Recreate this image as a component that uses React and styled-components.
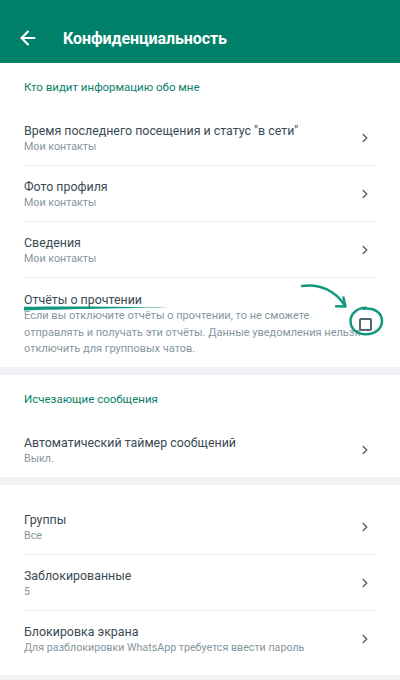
import React from 'react'
import styled, { createGlobalStyle } from 'styled-components'
import { ArrowLeft, ChevronRight } from 'lucide-react'

const GlobalStyle = createGlobalStyle`
    html, body {
        margin: 0;
        padding: 0;
        background: #ffffff;
    }
    body {
        font-family: Roboto, "Open Sans", sans-serif;
        -webkit-font-smoothing: antialiased;
    }
`

const sections = [
    {
        title: 'Кто видит информацию обо мне',
        rows: [
            { title: 'Время последнего посещения и статус "в сети"', sub: 'Мои контакты' },
            { title: 'Фото профиля', sub: 'Мои контакты' },
            { title: 'Сведения', sub: 'Мои контакты' },
        ],
        receipts: true,
    },
    {
        title: 'Исчезающие сообщения',
        rows: [{ title: 'Автоматический таймер сообщений', sub: 'Выкл.' }],
    },
    {
        rows: [
            { title: 'Группы', sub: 'Все' },
            { title: 'Заблокированные', sub: '5' },
            { title: 'Блокировка экрана', sub: 'Для разблокировки WhatsApp требуется ввести пароль' },
        ],
    },
]

const Annotation = () => (
    <AnnotationSvg width="110" height="70" viewBox="0 0 110 70">
        {/* hand drawn underline under the title */}
        <path d="M-266 28.8 C -230 28.2, -180 28.4, -121 29.6 C -180 30.4, -230 31.6, -266 32.4 Z" fill="#11987f" />
        {/* curved arrow */}
        <path d="M12 8 C 30 5.5, 46 13, 55 28" fill="none" stroke="#11987f" strokeWidth="2.4" strokeLinecap="round" />
        <path d="M53.5 19.5 L 55.5 28.5 L 46 28.2" fill="none" stroke="#11987f" strokeWidth="2.4" strokeLinecap="round" strokeLinejoin="round" />
        {/* circle around the checkbox */}
        <path d="M76 29.8 C 68 29.8, 60.5 35, 60.5 43 C 60.5 51, 67 56.3, 76 56.3 C 85 56.3, 92 50.5, 92 43 C 92 35, 85 29.5, 73.5 30.8" fill="none" stroke="#11987f" strokeWidth="2.5" strokeLinecap="round" />
    </AnnotationSvg>
)

const App = () => {
    return (
        <Page>
            <GlobalStyle />
            <Header>
                <BackButton>
                    <ArrowLeft size={22} strokeWidth={2.3} />
                </BackButton>
                <HeaderTitle>Конфиденциальность</HeaderTitle>
            </Header>

            {sections.map((section, i) => (
                <Section key={i} plain={!section.title}>
                    {section.title && <SectionTitle>{section.title}</SectionTitle>}
                    {section.rows.map((row, j) => (
                        <Row key={j} last={!section.receipts && j === section.rows.length - 1}>
                            <RowText>
                                <RowTitle>{row.title}</RowTitle>
                                <RowSub>{row.sub}</RowSub>
                            </RowText>
                            <IconSlot>
                                <ChevronRight size={14} strokeWidth={2.6} color="#54656f" />
                            </IconSlot>
                        </Row>
                    ))}
                    {section.receipts && (
                        <Row last receipts>
                            <RowText>
                                <RowTitle>Отчёты о прочтении</RowTitle>
                                <Description>
                                    Если вы отключите отчёты о прочтении, то не сможете<br />
                                    отправлять и получать эти отчёты. Данные уведомления нельзя<br />
                                    отключить для групповых чатов.
                                </Description>
                            </RowText>
                            <IconSlot>
                                <Checkbox />
                            </IconSlot>
                            <Annotation />
                        </Row>
                    )}
                </Section>
            ))}
        </Page>
    )
}

export default App

const Page = styled.div`
    width: 400px;
    min-height: 680px;
    background: #f0f2f5;
    overflow: hidden;
`

const Header = styled.header`
    height: 63px;
    box-sizing: border-box;
    padding: 13px 0 0 16px;
    background: #008069;
    color: #ffffff;
    display: flex;
    align-items: center;
`

const BackButton = styled.div`
    width: 24px;
    height: 24px;
    display: flex;
    align-items: center;
    justify-content: center;
    margin-right: 23px;
`

const HeaderTitle = styled.h1`
    margin: 0;
    font-size: 16px;
    font-weight: 700;
    letter-spacing: -0.1px;
`

const Section = styled.section`
    background: #ffffff;
    padding-top: ${p => (p.plain ? '14px' : '17px')};
    padding-bottom: ${p => (p.plain ? '9px' : '0')};
    margin-bottom: 8px;
`

const SectionTitle = styled.h2`
    margin: 0 24px 15px;
    font-size: 11.5px;
    line-height: 15px;
    font-weight: 400;
    color: #0b7f6b;
`

const Row = styled.div`
    position: relative;
    margin: 0 23px 0 24px;
    padding: ${p => (p.receipts ? '13px 0 9px' : '12px 0 11px')};
    border-bottom: ${p => (p.last ? 'none' : '1px solid #e9edef')};
    display: flex;
    align-items: center;
`

const RowText = styled.div`
    flex: 1;
    min-width: 0;
`

const RowTitle = styled.div`
    font-size: 12.4px;
    line-height: 17px;
    color: #3b4a54;
`

const RowSub = styled.div`
    font-size: 10.7px;
    line-height: 15px;
    color: #8696a0;
`

const Description = styled.div`
    font-size: 11px;
    line-height: 16.5px;
    color: #8696a0;
    white-space: nowrap;
`

const IconSlot = styled.div`
    width: 24px;
    flex-shrink: 0;
    display: flex;
    justify-content: center;
    align-items: center;
`

const Checkbox = styled.div`
    width: 13px;
    height: 13px;
    box-sizing: border-box;
    border: 2px solid #54656f;
    border-radius: 2px;
    background: #ffffff;
    position: relative;
    z-index: 1;
`

const AnnotationSvg = styled.svg`
    position: absolute;
    left: 266px;
    top: 0;
    overflow: visible;
    pointer-events: none;
`
